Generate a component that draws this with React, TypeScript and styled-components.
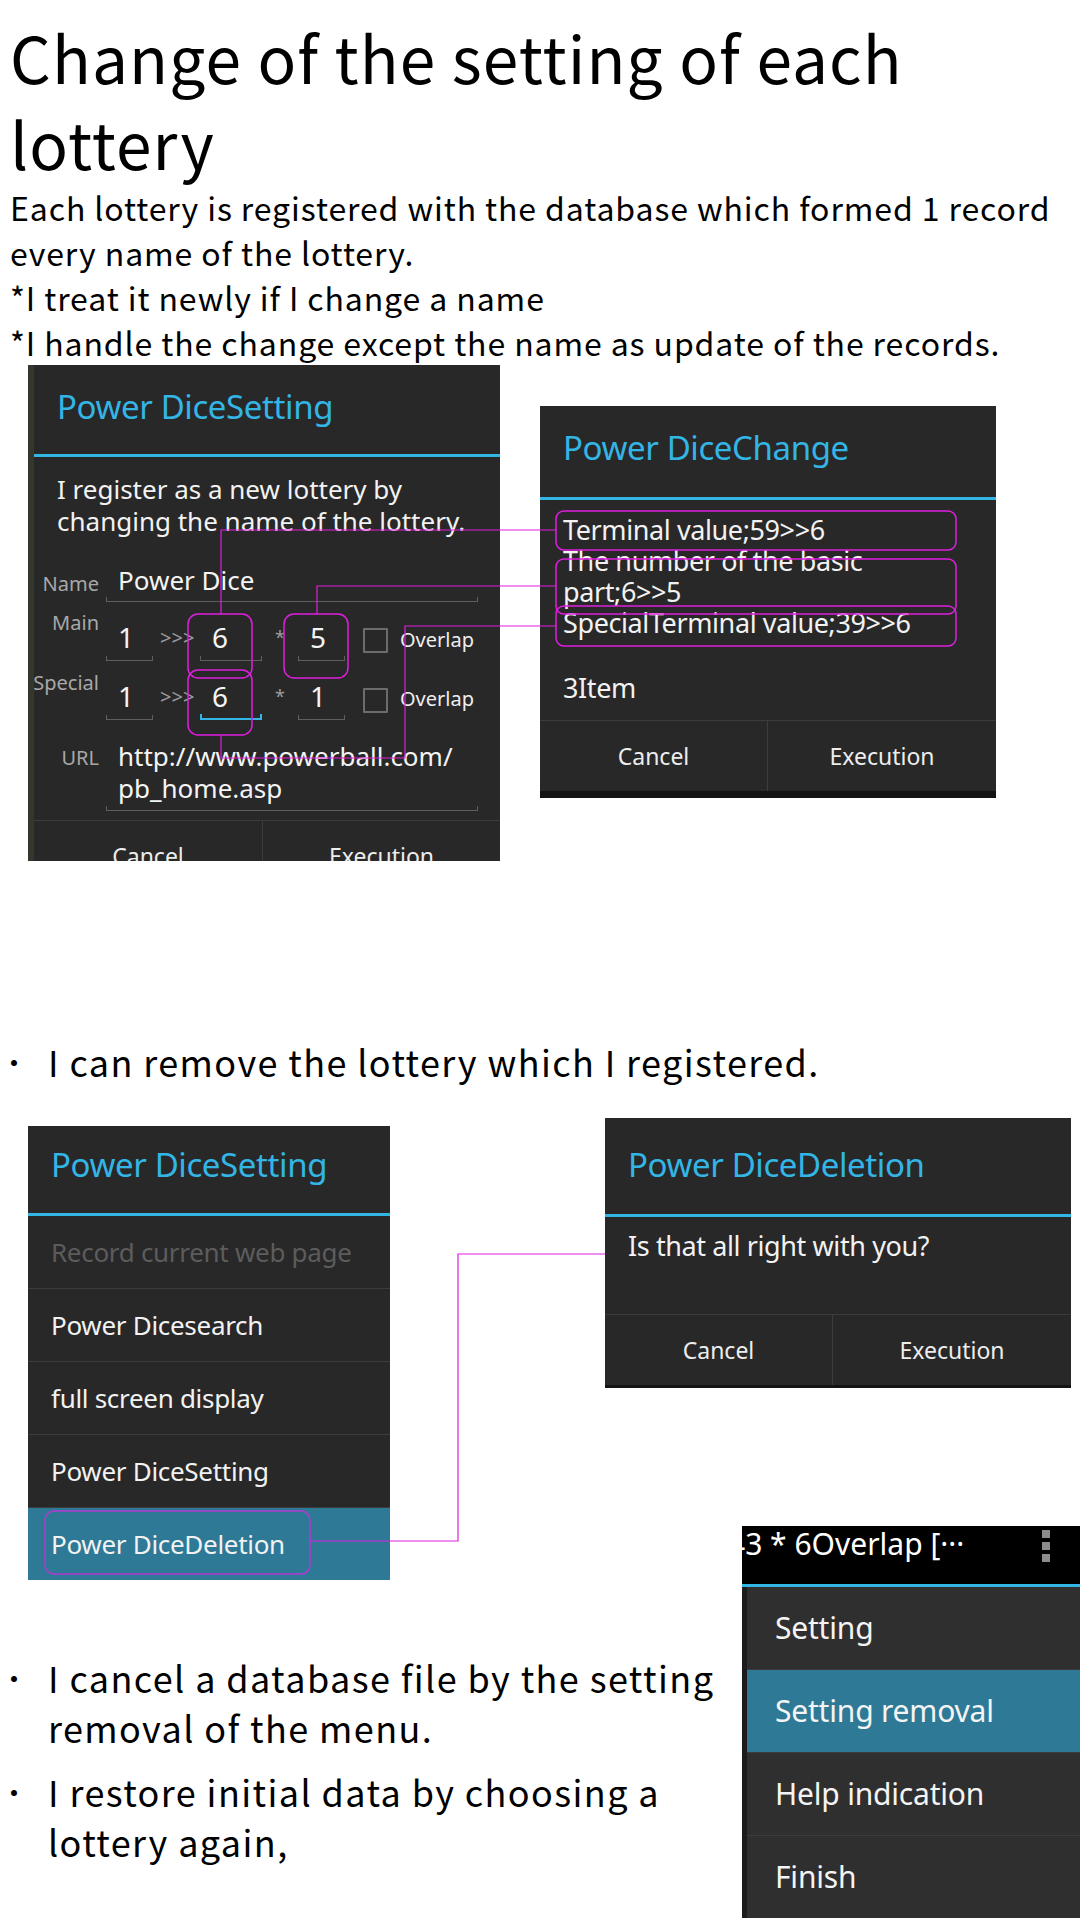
import React from "react";
import styled, { createGlobalStyle } from "styled-components";

const UI = `"Noto Sans", "Open Sans", Roboto, sans-serif`;
const JP = `"Noto Sans CJK JP", "Noto Sans", sans-serif`;
const BLUE = "#33b5e5";
const MAGENTA = "#e01ee0";
const DIVIDER = "#3c3c3c";

const Global = createGlobalStyle`
  html, body { margin: 0; padding: 0; background: #fff; }
  #root { width: 1080px; height: 1920px; overflow: hidden; }
`;

const Page = styled.div`
  width: 1080px;
  height: 1920px;
  overflow: hidden;
  font-family: ${JP};
  color: #000;
  background: #fff;
`;

const Title = styled.h1`
  margin: 0;
  padding: 13px 0 0 10px;
  font-size: 64px;
  line-height: 86px;
  font-weight: 400;
  letter-spacing: 1.1px;
`;

const Intro = styled.p`
  margin: 0;
  padding-left: 10px;
  font-size: 32px;
  line-height: 45px;
  letter-spacing: 0.9px;
`;

const Figure = styled.div<{ $h: number; $mt?: number }>`
  position: relative;
  display: flex;
  align-items: flex-start;
  height: ${(p) => p.$h}px;
  margin-top: ${(p) => p.$mt ?? 0}px;
`;

const Overlay = styled.svg`
  position: absolute;
  left: 0;
  top: 0;
  width: 1080px;
  height: 100%;
  pointer-events: none;
  overflow: visible;
`;

const Dialog = styled.div<{
  $w: number;
  $ml: number;
  $mt?: number;
  $h?: number;
  $strip?: boolean;
  $base?: number;
}>`
  flex: none;
  box-sizing: border-box;
  width: ${(p) => p.$w}px;
  margin-left: ${(p) => p.$ml}px;
  margin-top: ${(p) => p.$mt ?? 0}px;
  ${(p) => (p.$h ? `height: ${p.$h}px;` : "")}
  background: #282828;
  color: #f0f0f0;
  font-family: ${UI};
  overflow: hidden;
  display: flex;
  flex-direction: column;
  border-left: ${(p) => (p.$strip ? "6px solid #33372c" : "0")};
  border-bottom: ${(p) => (p.$base ? `${p.$base}px solid #141414` : "0")};
`;

const DialogTitle = styled.div<{ $pt: number; $pb: number }>`
  padding: ${(p) => p.$pt}px 0 ${(p) => p.$pb}px 23px;
  font-size: 33px;
  line-height: 40px;
  color: ${BLUE};
  letter-spacing: -0.4px;
  border-bottom: 3px solid ${BLUE};
  white-space: nowrap;
`;

const Message = styled.div<{ $fs: number; $lh: number; $pt: number; $pb?: number; $ls?: number }>`
  padding: ${(p) => p.$pt}px 20px ${(p) => p.$pb ?? 0}px 23px;
  font-size: ${(p) => p.$fs}px;
  line-height: ${(p) => p.$lh}px;
  letter-spacing: ${(p) => p.$ls ?? -0.4}px;
  color: #f2f2f2;
  white-space: nowrap;
`;

const ItemCount = styled.div`
  margin-top: 34px;
`;

const Form = styled.div`
  display: grid;
  grid-template-columns: 65px 47px 33px 62px 22px 47px 36px 1fr;
  column-gap: 7px;
  row-gap: 17px;
  align-items: start;
  margin-top: 27px;
  padding-right: 22px;
`;

const Label = styled.div<{ $offset: number }>`
  justify-self: end;
  margin-top: ${(p) => p.$offset}px;
  font-size: 20px;
  line-height: 24px;
  color: #a8a8a8;
  white-space: nowrap;
`;

const Field = styled.div<{
  $fs: number;
  $pt?: number;
  $pb: number;
  $focus?: boolean;
  $span?: boolean;
}>`
  position: relative;
  ${(p) => (p.$span ? "grid-column: 2 / -1;" : "")}
  padding: ${(p) => p.$pt ?? 0}px 0 ${(p) => p.$pb}px 12px;
  font-size: ${(p) => p.$fs}px;
  line-height: ${(p) => (p.$fs > 26 ? 36 : 32)}px;
  color: #f4f4f4;
  white-space: nowrap;
  border-bottom: 1px solid transparent;

  &::after {
    content: "";
    position: absolute;
    left: 0;
    right: 0;
    bottom: -1px;
    height: ${(p) => (p.$focus ? 6 : 5)}px;
    box-sizing: border-box;
    border: ${(p) => (p.$focus ? `2px solid ${BLUE}` : "1px solid #5f5f5f")};
    border-top: 0;
  }
`;

const Arrows = styled.div`
  padding-top: 1px;
  font-size: 20px;
  line-height: 36px;
  color: #9c9c9c;
  white-space: nowrap;
`;

const Star = styled.div`
  padding-top: 6px;
  text-align: center;
  font-size: 18px;
  line-height: 24px;
  color: #9c9c9c;
`;

const CheckBox = styled.div<{ $mt: number }>`
  justify-self: end;
  box-sizing: border-box;
  width: 25px;
  height: 25px;
  margin-top: ${(p) => p.$mt}px;
  border: 2px solid #6c6c6c;
  border-radius: 1px;
`;

const CheckLabel = styled.div`
  padding: 3px 0 0 5px;
  font-size: 20px;
  line-height: 36px;
  color: #eeeeee;
  white-space: nowrap;
`;

const ButtonBar = styled.div<{ $first: number; $mt?: number }>`
  display: grid;
  grid-template-columns: ${(p) => p.$first}px 1fr;
  margin-top: ${(p) => p.$mt ?? 0}px;
  border-top: 1px solid ${DIVIDER};
  flex: none;
`;

const DialogButton = styled.div`
  height: 70px;
  line-height: 70px;
  text-align: center;
  font-size: 23px;
  color: #ededed;
  & + & {
    border-left: 1px solid ${DIVIDER};
  }
`;

const MenuItem = styled.div<{ $active?: boolean; $disabled?: boolean }>`
  height: 72px;
  line-height: 72px;
  padding-left: 23px;
  font-size: 26px;
  letter-spacing: -0.3px;
  white-space: nowrap;
  color: ${(p) => (p.$disabled ? "#5c5c5c" : "#f2f2f2")};
  background: ${(p) => (p.$active ? "#2e7a96" : "transparent")};
  & + & {
    border-top: 1px solid ${DIVIDER};
  }
`;

const BulletRow = styled.div<{ $mt?: number }>`
  display: flex;
  margin-top: ${(p) => p.$mt ?? 0}px;
  font-size: 36px;
  line-height: 50px;
  letter-spacing: 1.4px;
  white-space: nowrap;
`;

const Dot = styled.span`
  flex: none;
  box-sizing: border-box;
  width: 48px;
  padding-left: 5px;
  letter-spacing: 0;
`;

const LowerRow = styled.div<{ $mt: number }>`
  display: flex;
  align-items: flex-start;
  margin-top: ${(p) => p.$mt}px;
`;

const Bullets = styled.div`
  flex: 1;
  padding-top: 126px;
  display: flex;
  flex-direction: column;
  gap: 14px;
`;

const Options = styled.div`
  flex: none;
  width: 338px;
  font-family: ${UI};
  color: #f4f4f4;
`;

const ActionBar = styled.div`
  display: flex;
  align-items: flex-start;
  height: 58px;
  background: #000;
  border-bottom: 3px solid ${BLUE};
  overflow: hidden;
`;

const ActionTitle = styled.div`
  margin-left: -14px;
  font-size: 30px;
  line-height: 36px;
  white-space: nowrap;
  color: #fff;
`;

const Overflow = styled.svg`
  flex: none;
  margin: 4px 30px 0 auto;
`;

const OptionList = styled.div`
  border-left: 5px solid #1c1c1c;
  background: #2f2f2f;
`;

const OptionItem = styled.div<{ $active?: boolean }>`
  height: 82px;
  line-height: 82px;
  padding-left: 28px;
  font-size: 30px;
  letter-spacing: -0.2px;
  white-space: nowrap;
  background: ${(p) => (p.$active ? "#2e7a96" : "transparent")};
  & + & {
    border-top: 1px solid ${DIVIDER};
  }
`;

function Connectors1() {
  return (
    <Overlay viewBox="0 0 1080 496" height={496}>
      <g fill="none" stroke={MAGENTA} strokeWidth={1.5}>
        <rect x={188} y={249} width={64} height={64} rx={10} />
        <rect x={188} y={305} width={64} height={65} rx={10} />
        <rect x={284} y={249} width={64} height={64} rx={10} />
        <rect x={556} y={146} width={400} height={39} rx={8} />
        <rect x={556} y={194} width={400} height={55} rx={8} />
        <rect x={556} y={241} width={400} height={40} rx={8} />
      </g>
      <g fill="none" stroke={MAGENTA} strokeWidth={1.2}>
        <polyline points="221,249 221,165 556,165" />
        <polyline points="317,249 317,221 556,221" />
        <polyline points="221,370 221,393 405,393 405,261 556,261" />
      </g>
    </Overlay>
  );
}

function Connectors2() {
  return (
    <Overlay viewBox="0 0 1080 462" height={462}>
      <rect x={45} y={393} width={265} height={63} rx={9} fill="none" stroke="#b03ad0" strokeWidth={1.5} />
      <polyline points="310,423 458,423 458,136 605,136" fill="none" stroke={MAGENTA} strokeWidth={1.2} />
    </Overlay>
  );
}

export default function App() {
  return (
    <Page>
      <Global />
      <Title>
        Change of the setting of each
        <br />
        lottery
      </Title>
      <Intro>
        Each lottery is registered with the database which formed 1 record
        <br />
        every name of the lottery.
        <br />
        *I treat it newly if I change a name
        <br />
        *I handle the change except the name as update of the records.
      </Intro>

      <Figure $h={496}>
        <Dialog $w={472} $ml={28} $h={496} $strip>
          <DialogTitle $pt={22} $pb={27}>Power DiceSetting</DialogTitle>
          <Message $fs={26} $lh={32} $pt={16} $ls={0}>
            I register as a new lottery by
            <br />
            changing the name of the lottery.
          </Message>
          <Form>
            <Label $offset={8}>Name</Label>
            <Field $fs={26} $pb={5} $span>
              Power Dice
            </Field>

            <Label $offset={-8}>Main</Label>
            <Field $fs={28} $pb={5}>1</Field>
            <Arrows>&gt;&gt;&gt;</Arrows>
            <Field $fs={28} $pb={5}>6</Field>
            <Star>*</Star>
            <Field $fs={28} $pb={5}>5</Field>
            <CheckBox $mt={9} />
            <CheckLabel>Overlap</CheckLabel>

            <Label $offset={-7}>Special</Label>
            <Field $fs={28} $pb={5}>1</Field>
            <Arrows>&gt;&gt;&gt;</Arrows>
            <Field $fs={28} $pb={5} $focus>6</Field>
            <Star>*</Star>
            <Field $fs={28} $pb={5}>1</Field>
            <CheckBox $mt={10} />
            <CheckLabel>Overlap</CheckLabel>

            <Label $offset={9}>URL</Label>
            <Field $fs={26} $pt={3} $pb={6} $span>
              http://www.powerball.com/
              <br />
              pb_home.asp
            </Field>
          </Form>
          <ButtonBar $first={228} $mt={9}>
            <DialogButton>Cancel</DialogButton>
            <DialogButton>Execution</DialogButton>
          </ButtonBar>
        </Dialog>

        <Dialog $w={456} $ml={40} $mt={41} $base={7}>
          <DialogTitle $pt={22} $pb={29}>Power DiceChange</DialogTitle>
          <Message $fs={27} $lh={31} $pt={14} $pb={17}>
            Terminal value;59&gt;&gt;6
            <br />
            The number of the basic
            <br />
            part;6&gt;&gt;5
            <br />
            SpecialTerminal value;39&gt;&gt;6
            <ItemCount>3Item</ItemCount>
          </Message>
          <ButtonBar $first={227}>
            <DialogButton>Cancel</DialogButton>
            <DialogButton>Execution</DialogButton>
          </ButtonBar>
        </Dialog>
        <Connectors1 />
      </Figure>

      <BulletRow $mt={175}>
        <Dot>･</Dot>
        <span>I can remove the lottery which I registered.</span>
      </BulletRow>

      <Figure $h={462} $mt={32}>
        <Dialog $w={362} $ml={28} $mt={8}>
          <DialogTitle $pt={19} $pb={28}>Power DiceSetting</DialogTitle>
          <MenuItem $disabled>Record current web page</MenuItem>
          <MenuItem>Power Dicesearch</MenuItem>
          <MenuItem>full screen display</MenuItem>
          <MenuItem>Power DiceSetting</MenuItem>
          <MenuItem $active>Power DiceDeletion</MenuItem>
        </Dialog>
        <Dialog $w={466} $ml={215} $base={3}>
          <DialogTitle $pt={27} $pb={29}>Power DiceDeletion</DialogTitle>
          <Message $fs={27} $lh={31} $pt={13} $pb={53}>
            Is that all right with you?
          </Message>
          <ButtonBar $first={227}>
            <DialogButton>Cancel</DialogButton>
            <DialogButton>Execution</DialogButton>
          </ButtonBar>
        </Dialog>
        <Connectors2 />
      </Figure>

      <LowerRow $mt={-54}>
        <Bullets>
          <BulletRow>
            <Dot>･</Dot>
            <span>
              I cancel a database file by the setting
              <br />
              removal of the menu.
            </span>
          </BulletRow>
          <BulletRow>
            <Dot>･</Dot>
            <span>
              I restore initial data by choosing a
              <br />
              lottery again,
            </span>
          </BulletRow>
        </Bullets>
        <Options>
          <ActionBar>
            <ActionTitle>43 * 6Overlap [···</ActionTitle>
            <Overflow width={8} height={32} viewBox="0 0 8 32">
              <rect x={0} y={0} width={8} height={8} fill="#8c8c8c" />
              <rect x={0} y={12} width={8} height={8} fill="#8c8c8c" />
              <rect x={0} y={24} width={8} height={8} fill="#8c8c8c" />
            </Overflow>
          </ActionBar>
          <OptionList>
            <OptionItem>Setting</OptionItem>
            <OptionItem $active>Setting removal</OptionItem>
            <OptionItem>Help indication</OptionItem>
            <OptionItem>Finish</OptionItem>
          </OptionList>
        </Options>
      </LowerRow>
    </Page>
  );
}
